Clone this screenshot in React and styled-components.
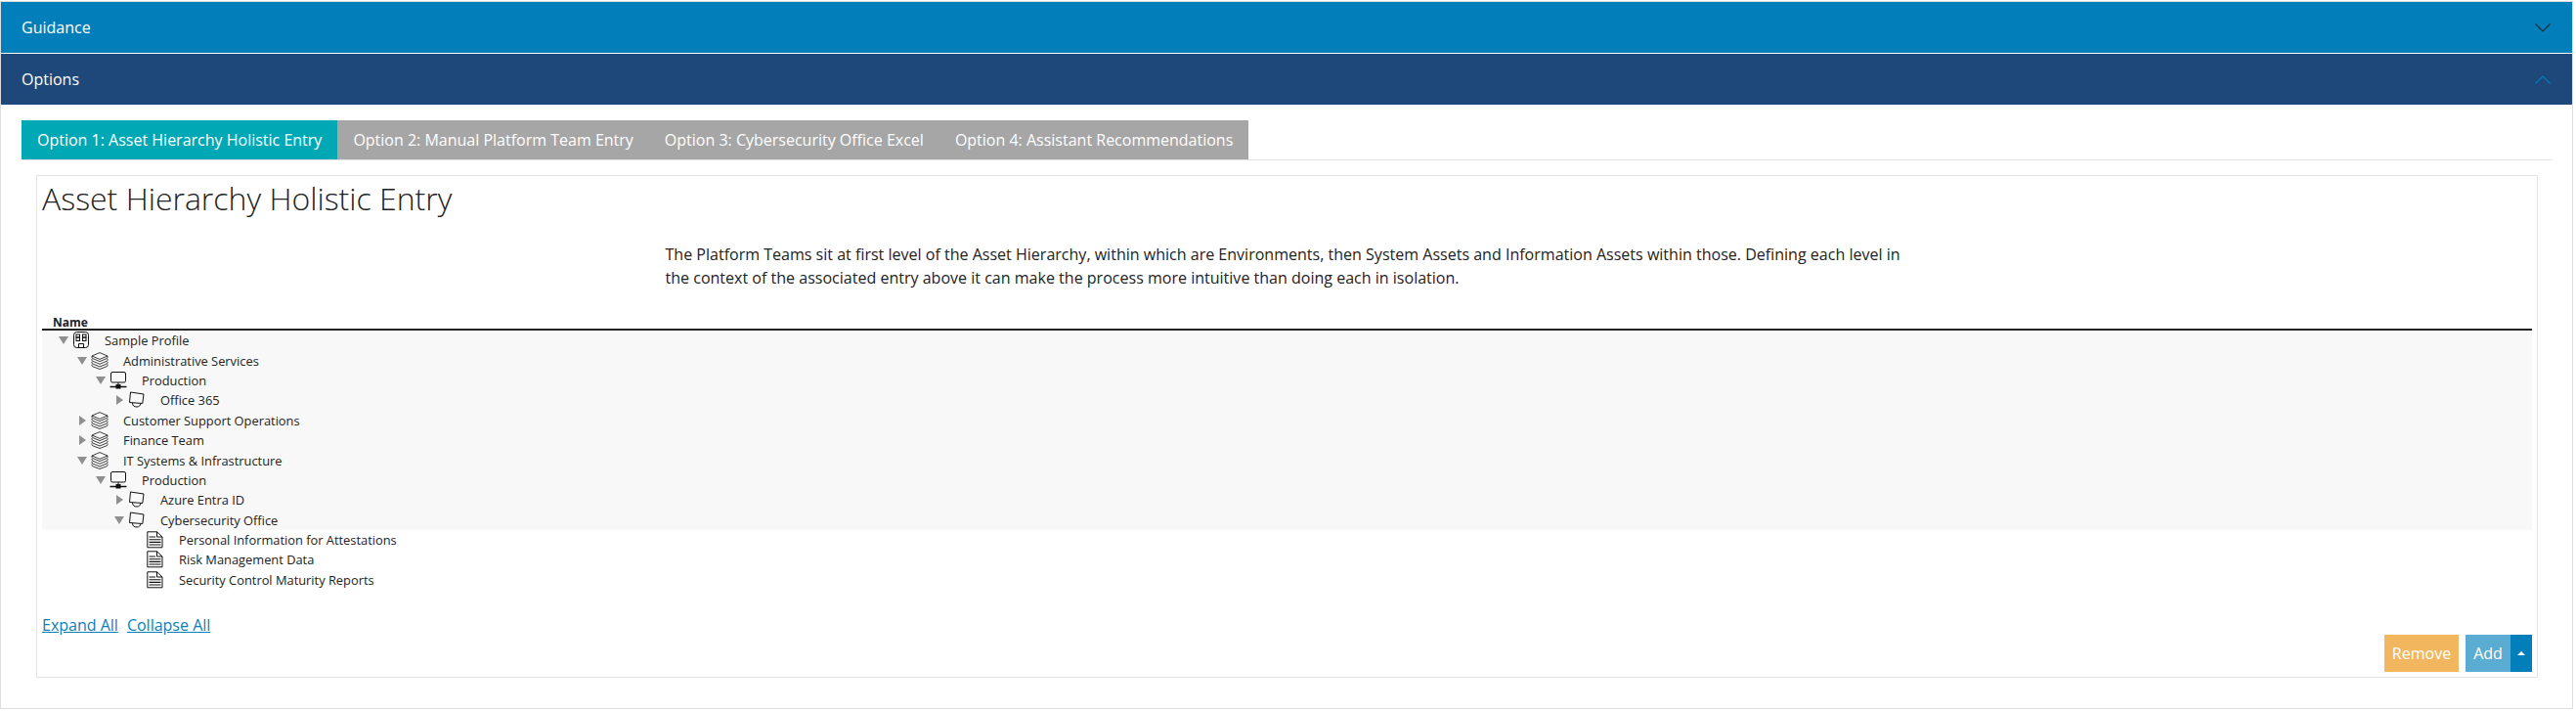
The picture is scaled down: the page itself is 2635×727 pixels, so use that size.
import React from "react";
import styled, { createGlobalStyle } from "styled-components";

const GlobalStyle = createGlobalStyle`
  html, body {
    margin: 0;
    padding: 0;
    background: #fff;
    font-family: "Open Sans", "Noto Sans", sans-serif;
    color: #222;
  }
  * {
    box-sizing: border-box;
  }
`;

const tabs = [
  "Option 1: Asset Hierarchy Holistic Entry",
  "Option 2: Manual Platform Team Entry",
  "Option 3: Cybersecurity Office Excel",
  "Option 4: Assistant Recommendations",
];

const rows = [
  { level: 0, icon: "profile", toggle: "open", label: "Sample Profile", shaded: true },
  { level: 1, icon: "stack", toggle: "open", label: "Administrative Services", shaded: true },
  { level: 2, icon: "network", toggle: "open", label: "Production", shaded: true },
  { level: 3, icon: "monitor", toggle: "closed", label: "Office 365", shaded: true },
  { level: 1, icon: "stack", toggle: "closed", label: "Customer Support Operations", shaded: true },
  { level: 1, icon: "stack", toggle: "closed", label: "Finance Team", shaded: true },
  { level: 1, icon: "stack", toggle: "open", label: "IT Systems & Infrastructure", shaded: true },
  { level: 2, icon: "network", toggle: "open", label: "Production", shaded: true },
  { level: 3, icon: "monitor", toggle: "closed", label: "Azure Entra ID", shaded: true },
  { level: 3, icon: "monitor", toggle: "open", label: "Cybersecurity Office", shaded: true },
  { level: 4, icon: "doc", label: "Personal Information for Attestations" },
  { level: 4, icon: "doc", label: "Risk Management Data" },
  { level: 4, icon: "doc", label: "Security Control Maturity Reports" },
];

const ProfileIcon = () => (
  <svg width="18" height="18" viewBox="0 0 18 18" fill="none" stroke="#111" strokeWidth="1">
    <rect x="1.5" y="0.5" width="15" height="16" rx="3" />
    <rect x="4" y="3" width="3.5" height="3" />
    <rect x="4" y="6" width="3.5" height="3.5" />
    <rect x="10.5" y="3" width="3.5" height="3" />
    <rect x="10.5" y="6" width="3.5" height="3.5" />
    <path d="M6.5 16.5 V12.5 H11.5 V16.5" />
  </svg>
);

const StackIcon = () => (
  <svg width="18" height="18" viewBox="0 0 18 18" fill="none" stroke="#111" strokeWidth="0.8">
    <path d="M1 4 L9 0.6 L17 4 L9 7.4 Z" />
    <path d="M1 4 V5.5 Q1 6.2 2 6.6 L9 9.6 L16 6.6 Q17 6.2 17 5.5 V4" />
    <path d="M1 7 V8.2 Q1 8.9 2 9.3 L9 12.3 L16 9.3 Q17 8.9 17 8.2 V7" />
    <path d="M1 9.8 V11 Q1 11.7 2 12.1 L9 15 L16 12.1 Q17 11.7 17 11 V9.8" />
    <path d="M1 12.5 V13.7 Q1 14.4 2 14.8 L9 17.5 L16 14.8 Q17 14.4 17 13.7 V12.5" />
  </svg>
);

const NetworkIcon = () => (
  <svg width="18" height="18" viewBox="0 0 18 18" fill="none" stroke="#111" strokeWidth="1">
    <rect x="1.5" y="0.5" width="15" height="10.5" rx="1.5" />
    <path d="M9 11 V13.5" />
    <path d="M0.5 15.5 H17.5" strokeWidth="1.5" />
    <rect x="7" y="13.5" width="4" height="3.5" fill="#111" />
  </svg>
);

const MonitorIcon = () => (
  <svg width="18" height="18" viewBox="0 0 18 18" fill="none" stroke="#111" strokeWidth="1">
    <path d="M2.5 1 L16 3 L14.8 12.5 L1.5 11.5 Z" />
    <path d="M4.5 12 C4.5 15 6.5 16 9 16 C11 16 12.5 15 13 12.5" />
  </svg>
);

const DocIcon = () => (
  <svg width="17" height="18" viewBox="0 0 17 18" fill="none" stroke="#111" strokeWidth="1">
    <path d="M0.8 0.8 H10.5 L16 6 V16.8 H0.8 Z" />
    <path d="M10.5 0.8 V6 H16" />
    <path d="M2.5 6 H9 M2.5 8.8 H14.5 M2.5 11.4 H14.5 M2.5 14 H14.5" strokeWidth="1.1" />
  </svg>
);

const icons = {
  profile: ProfileIcon,
  stack: StackIcon,
  network: NetworkIcon,
  monitor: MonitorIcon,
  doc: DocIcon,
};

const Chevron = ({ up, color }) => (
  <ChevronSvg viewBox="0 0 16 9" fill="none" stroke={color} strokeWidth="1.2">
    <path d={up ? "M0.5 8.5 L8 1 L15.5 8.5" : "M0.5 0.5 L8 8 L15.5 0.5"} />
  </ChevronSvg>
);

const App = () => {
  return (
    <Page>
      <GlobalStyle />
      <Bar $bg="#027fbb">
        Guidance
        <Chevron color="#1c2a33" />
      </Bar>
      <Bar $bg="#1e4879">
        Options
        <Chevron up color="#027fbb" />
      </Bar>
      <Content>
        <TabList>
          {tabs.map((t, i) => (
            <Tab key={t} $active={i === 0}>
              {t}
            </Tab>
          ))}
        </TabList>
        <Panel>
          <Title>Asset Hierarchy Holistic Entry</Title>
          <Description>
            The Platform Teams sit at first level of the Asset Hierarchy, within which are
            Environments, then System Assets and Information Assets within those. Defining each
            level in the context of the associated entry above it can make the process more
            intuitive than doing each in isolation.
          </Description>
          <TreeHeader>Name</TreeHeader>
          <Tree>
            {rows.map((row, i) => {
              const Icon = icons[row.icon];
              return (
                <Row key={i} $shaded={row.shaded} $level={row.level}>
                  <Toggle>
                    {row.toggle === "open" && <OpenCaret />}
                    {row.toggle === "closed" && <ClosedCaret />}
                  </Toggle>
                  <IconBox>
                    <Icon />
                  </IconBox>
                  <Label>{row.label}</Label>
                </Row>
              );
            })}
          </Tree>
          <Links>
            <TextLink href="#">Expand All</TextLink>
            <TextLink href="#">Collapse All</TextLink>
          </Links>
          <Actions>
            <Remove>Remove</Remove>
            <SplitButton>
              <AddButton>Add</AddButton>
              <CaretButton>
                <UpCaret />
              </CaretButton>
            </SplitButton>
          </Actions>
        </Panel>
      </Content>
    </Page>
  );
};

export default App;

const Page = styled.div`
  width: 2632px;
  height: 724px;
  margin-top: 1px;
  border: 1px solid #dedede;
  display: flex;
  flex-direction: column;
`;

const Bar = styled.div`
  height: 52px;
  margin-bottom: 1px;
  padding: 0 22px 0 21px;
  background: ${(p) => p.$bg};
  color: #fff;
  font-size: 16px;
  display: flex;
  align-items: center;
  justify-content: space-between;
`;

const ChevronSvg = styled.svg`
  width: 16px;
  height: 9px;
`;

const Content = styled.div`
  flex: 1;
  padding: 15px 20px 31px 21px;
  display: flex;
  flex-direction: column;
`;

const TabList = styled.div`
  display: flex;
  height: 41px;
  border-bottom: 1px solid #e4e4e4;
`;

const Tab = styled.div`
  height: 40px;
  padding: 0 16px;
  display: flex;
  align-items: center;
  color: #fff;
  font-size: 16px;
  background: ${(p) => (p.$active ? "#00a8b5" : "#a6a6a6")};
`;

const Panel = styled.div`
  position: relative;
  flex: 1;
  margin: 15px 15px 0 15px;
  border: 1px solid #e4e4e4;
  padding: 0 5px;
`;

const Title = styled.h1`
  margin: 0;
  height: 50px;
  font-size: 32px;
  line-height: 46px;
  font-weight: 300;
  color: #222;
`;

const Description = styled.p`
  width: 1272px;
  margin: 18px auto 0;
  font-size: 16.05px;
  line-height: 24px;
  color: #222;
`;

const TreeHeader = styled.div`
  margin-top: 27px;
  padding-left: 11px;
  height: 13px;
  font-size: 12px;
  line-height: 13px;
  font-weight: 700;
  color: #222;
`;

const Tree = styled.div`
  border-top: 2px solid #222;
`;

const Row = styled.div`
  height: 20.4px;
  display: flex;
  align-items: center;
  padding-left: ${(p) => 12 + p.$level * 19}px;
  background: ${(p) => (p.$shaded ? "#f8f8f8" : "transparent")};
`;

const Toggle = styled.span`
  width: 19px;
  flex: none;
  display: flex;
  align-items: center;
  padding-left: 5px;
`;

const OpenCaret = styled.span`
  width: 0;
  height: 0;
  border-left: 5px solid transparent;
  border-right: 5px solid transparent;
  border-top: 8px solid #8f8f8f;
`;

const ClosedCaret = styled.span`
  width: 0;
  height: 0;
  margin-left: 2px;
  border-top: 5px solid transparent;
  border-bottom: 5px solid transparent;
  border-left: 7px solid #8f8f8f;
`;

const IconBox = styled.span`
  width: 33px;
  flex: none;
  display: flex;
  align-items: center;
`;

const Label = styled.span`
  font-size: 12.85px;
  color: #222;
  white-space: nowrap;
`;

const Links = styled.div`
  margin-top: 24px;
  display: flex;
  gap: 9px;
`;

const TextLink = styled.a`
  font-size: 16px;
  line-height: 24px;
  color: #0a80bb;
  text-decoration: underline;
`;

const Actions = styled.div`
  position: absolute;
  right: 5px;
  bottom: 5px;
  display: flex;
  gap: 7px;
`;

const BaseButton = styled.button`
  height: 38px;
  border: 0;
  padding: 0;
  color: #fff;
  font-family: inherit;
  font-size: 16px;
  display: flex;
  align-items: center;
  justify-content: center;
`;

const Remove = styled(BaseButton)`
  width: 76px;
  background: #f2b75e;
`;

const SplitButton = styled.div`
  display: flex;
`;

const AddButton = styled(BaseButton)`
  width: 46px;
  background: #5bacd3;
`;

const CaretButton = styled(BaseButton)`
  width: 22px;
  background: #027fbb;
`;

const UpCaret = styled.span`
  width: 0;
  height: 0;
  border-left: 4px solid transparent;
  border-right: 4px solid transparent;
  border-bottom: 4px solid #fff;
`;
